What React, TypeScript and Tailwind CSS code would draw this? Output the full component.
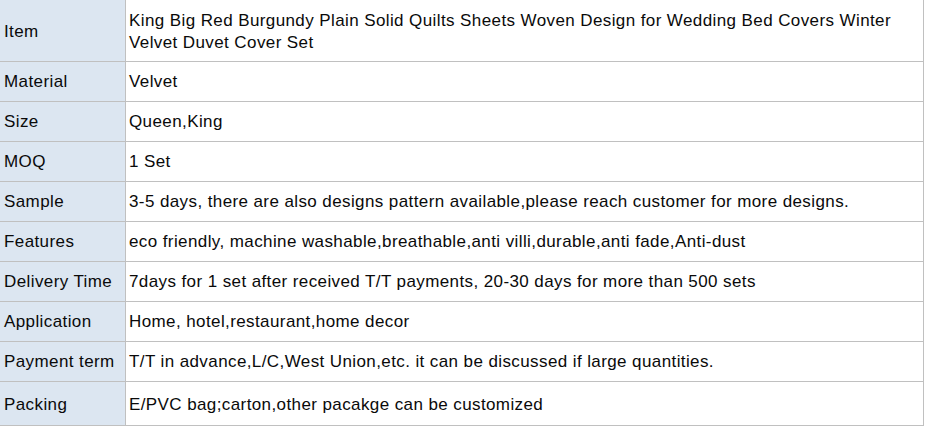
const rows: { label: string; value: string; h: string; pad?: string }[] = [
  {
    label: 'Item',
    value:
      'King Big Red Burgundy Plain Solid Quilts Sheets Woven Design for Wedding Bed Covers Winter Velvet Duvet Cover Set',
    h: 'h-[62px]',
    pad: 'pt-[2px]',
  },
  { label: 'Material', value: 'Velvet', h: 'h-[40px]' },
  { label: 'Size', value: 'Queen,King', h: 'h-[40px]' },
  { label: 'MOQ', value: '1 Set', h: 'h-[40px]' },
  {
    label: 'Sample',
    value: '3-5 days, there are also designs pattern available,please reach customer for more designs.',
    h: 'h-[40px]',
  },
  {
    label: 'Features',
    value: 'eco friendly, machine washable,breathable,anti villi,durable,anti fade,Anti-dust',
    h: 'h-[40px]',
  },
  {
    label: 'Delivery Time',
    value: '7days for 1 set after received T/T payments, 20-30 days for more than 500 sets',
    h: 'h-[40px]',
  },
  { label: 'Application', value: 'Home, hotel,restaurant,home decor', h: 'h-[40px]' },
  {
    label: 'Payment term',
    value: 'T/T in advance,L/C,West Union,etc. it can be discussed if large quantities.',
    h: 'h-[40px]',
  },
  { label: 'Packing', value: 'E/PVC bag;carton,other pacakge can be customized', h: 'h-[44px]', pad: 'pt-[3px]' },
]

export default function App() {
  return (
    <div className="w-[925px] h-[427px] bg-white font-['Liberation_Sans',Arial,sans-serif] text-[17px] leading-[22px] tracking-[0.4px] text-[#0a0a0a]">
      <div className="w-[924px] border-r border-[#c0c0c0]">
        {rows.map((r) => (
          <div key={r.label} className={`flex border-b border-[#c0c0c0] ${r.h}`}>
            <div
              className={`w-[126px] shrink-0 flex items-center pl-[4px] bg-[#dce6f1] border-r border-[#c0c0c0] ${r.pad ?? ''}`}
            >
              {r.label}
            </div>
            <div className={`flex-1 flex items-center pl-[3px] pr-2 ${r.pad ?? ''}`}>{r.value}</div>
          </div>
        ))}
      </div>
    </div>
  )
}
